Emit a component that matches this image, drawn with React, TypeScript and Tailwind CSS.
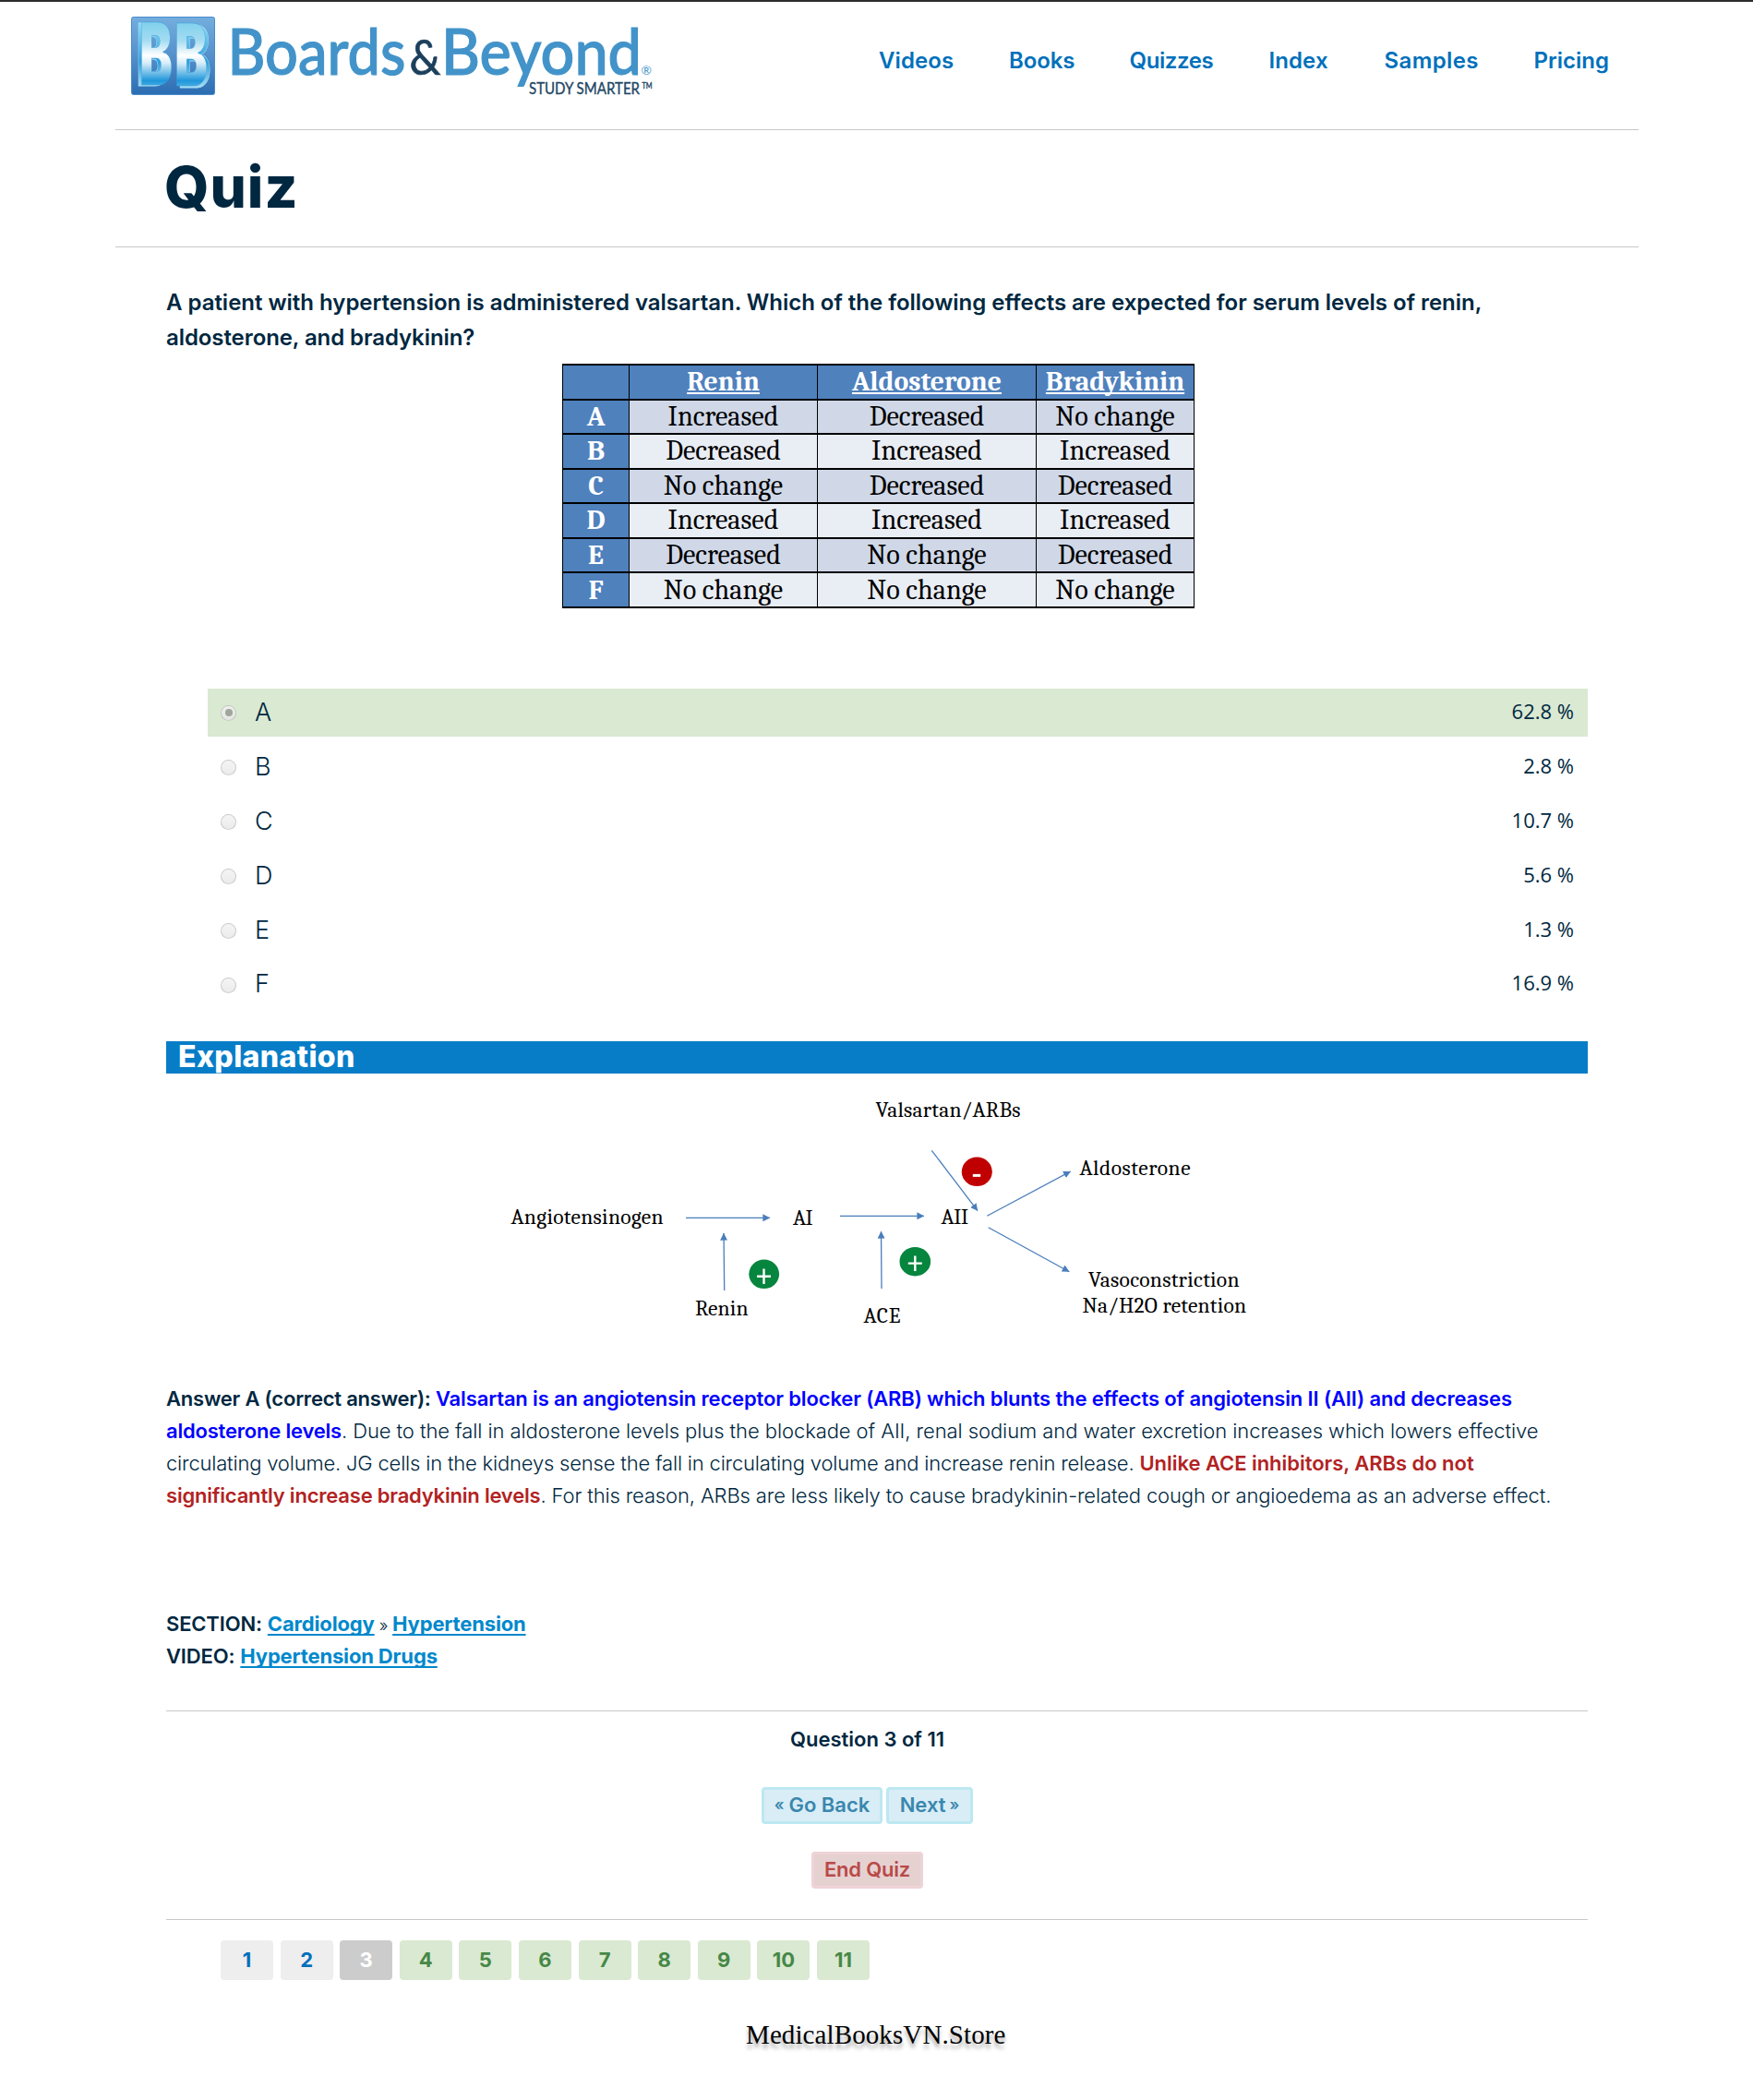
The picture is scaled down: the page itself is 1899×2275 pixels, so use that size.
import type { ReactNode } from "react";

const navItems = [
  { label: "Videos", cls: "w-[81px] tracking-[0.1px]" },
  { label: "Books", cls: "w-[70.5px] tracking-[-0.1px]" },
  { label: "Quizzes", cls: "w-[91px] tracking-[-0.4px]" },
  { label: "Index", cls: "w-[65px] tracking-[0.1px]" },
  { label: "Samples", cls: "w-[102px] tracking-[0.4px]" },
  { label: "Pricing", cls: "w-[81px] tracking-[0px]" },
];

const effects = [
  ["A", "Increased", "Decreased", "No change"],
  ["B", "Decreased", "Increased", "Increased"],
  ["C", "No change", "Decreased", "Decreased"],
  ["D", "Increased", "Increased", "Increased"],
  ["E", "Decreased", "No change", "Decreased"],
  ["F", "No change", "No change", "No change"],
];

const options = [
  { label: "A", share: "62.8 %", selected: true },
  { label: "B", share: "2.8 %" },
  { label: "C", share: "10.7 %" },
  { label: "D", share: "5.6 %" },
  { label: "E", share: "1.3 %" },
  { label: "F", share: "16.9 %" },
];

function Logo() {
  return (
    <svg width="570" height="90" viewBox="140 16 570 90" className="block shrink-0">
      <defs>
        <linearGradient id="tile" x1="0" y1="0" x2="0" y2="1">
          <stop offset="0" stopColor="#74aede" />
          <stop offset="0.5" stopColor="#5590cb" />
          <stop offset="1" stopColor="#2b6cb2" />
        </linearGradient>
        <linearGradient id="face" gradientUnits="userSpaceOnUse" x1="0" y1="24" x2="0" y2="96">
          <stop offset="0" stopColor="#7fd0ec" />
          <stop offset="0.28" stopColor="#a5dcf2" />
          <stop offset="0.5" stopColor="#ffffff" />
          <stop offset="0.62" stopColor="#d5ecf8" />
          <stop offset="0.88" stopColor="#1f97da" />
          <stop offset="1" stopColor="#55b4e4" />
        </linearGradient>
        <linearGradient id="side" gradientUnits="userSpaceOnUse" x1="0" y1="24" x2="0" y2="96">
          <stop offset="0" stopColor="#8fdcf5" />
          <stop offset="0.6" stopColor="#2f9fdc" />
          <stop offset="1" stopColor="#a9def5" />
        </linearGradient>
      </defs>
      <rect x="142.5" y="18.5" width="90" height="84" rx="2" fill="url(#tile)" stroke="#4a8ccb" />
      <g fontFamily="Inter, sans-serif" fontWeight="900" fontSize="94">
        <g fill="url(#side)" stroke="#9fdcf5" strokeWidth="0.8">
          <text x="147.5" y="93" textLength="36" lengthAdjust="spacingAndGlyphs">B</text>
          <text x="192.5" y="94.5" textLength="36" lengthAdjust="spacingAndGlyphs">B</text>
        </g>
        <g fill="url(#face)" stroke="#3f9fd8" strokeWidth="0.5">
          <text x="151" y="92" textLength="36" lengthAdjust="spacingAndGlyphs">B</text>
          <text x="189" y="93" textLength="36" lengthAdjust="spacingAndGlyphs">B</text>
        </g>
      </g>
      <g fontFamily="Lato, sans-serif" fill="#4293c9">
        <g fontSize="69" fontWeight="500" stroke="#4293c9" strokeWidth="1.1">
          <text x="246.5" y="80.5" textLength="193" lengthAdjust="spacingAndGlyphs">Boards</text>
          <text x="478" y="80.5" textLength="217" lengthAdjust="spacingAndGlyphs">Beyond</text>
        </g>
        <text x="443.5" y="80.5" fontSize="53" fill="#1c3f5c" stroke="#1c3f5c" strokeWidth="0.7" textLength="34" lengthAdjust="spacingAndGlyphs">&amp;</text>
        <text x="694.5" y="81" fontSize="14" textLength="11.5" lengthAdjust="spacingAndGlyphs">®</text>
        <g fill="#1f4766" stroke="#1f4766" strokeWidth="0.4">
          <text x="573" y="102" fontSize="17.5" textLength="120" lengthAdjust="spacingAndGlyphs">STUDY SMARTER</text>
          <text x="695.5" y="96" fontSize="8.5" textLength="11" lengthAdjust="spacingAndGlyphs">TM</text>
        </g>
      </g>
    </svg>
  );
}

function Cell({ children, tone }: { children?: ReactNode; tone: string }) {
  return (
    <div className={`flex items-center justify-center border-b-2 border-r border-black pt-[1px] leading-none ${tone}`}>
      {children}
    </div>
  );
}

function EffectsTable() {
  const head = "bg-[#4f81bd] text-white font-bold";
  return (
    <div className="ml-[429px] mt-[9px] grid h-[265px] w-[685px] grid-cols-[72px_204px_237px_171px] grid-rows-7 border-l border-t-2 border-black font-[Cambria,Caladea,serif] text-[30.2px]">
      <Cell tone={head} />
      {["Renin", "Aldosterone", "Bradykinin"].map((h) => (
        <Cell key={h} tone={head}>
          <span className="text-[29.7px] underline decoration-2 underline-offset-[2px] [text-decoration-skip-ink:none]">{h}</span>
        </Cell>
      ))}
      {effects.map((row, r) =>
        row.map((text, c) => (
          <Cell key={`${r}-${c}`} tone={c === 0 ? head : r % 2 ? "bg-[#e9edf4] text-black" : "bg-[#d0d8e8] text-black"}>
            {text}
          </Cell>
        ))
      )}
    </div>
  );
}

function Radio({ checked }: { checked?: boolean }) {
  return (
    <span className="flex size-[17px] items-center justify-center rounded-full border border-black/15 bg-linear-to-b from-[#f2f2f2]/80 to-[#e6e6e6]/80">
      {checked && <span className="size-[8px] rounded-full bg-[#a0a59d]" />}
    </span>
  );
}

const arrows = [
  [743, 1319.3, 834, 1319.3],
  [910, 1317.3, 1001, 1317.3],
  [784.7, 1398, 784, 1336],
  [955, 1396, 954.5, 1334],
  [1009.3, 1246.3, 1059, 1311.7],
  [1069.3, 1317.3, 1159.7, 1269],
  [1070.7, 1329.7, 1158.3, 1377.7],
];

const labels: [string, number, number, number][] = [
  ["Valsartan/ARBs", 948.5, 1210, 157],
  ["Angiotensinogen", 553.5, 1325.5, 165],
  ["AI", 859, 1327.3, 21.5],
  ["AII", 1019.5, 1325.7, 29.5],
  ["Renin", 753, 1425.3, 57.5],
  ["ACE", 935.5, 1433.3, 40],
  ["Aldosterone", 1169.5, 1273.3, 120],
  ["Vasoconstriction", 1179, 1393.5, 163.5],
  ["Na/H2O retention", 1172.5, 1422.3, 177.5],
];

function Diagram() {
  return (
    <svg width="1540" height="334" viewBox="180 1163 1540 334" className="block">
      <defs>
        <marker id="head" markerUnits="userSpaceOnUse" markerWidth="8" markerHeight="8" refX="7.6" refY="4" orient="auto">
          <path d="M0 0 L7.8 4 L0 8 Z" fill="#4a7ebb" />
        </marker>
      </defs>
      <g stroke="#4a7ebb" strokeWidth="1.3">
        {arrows.map(([x1, y1, x2, y2]) => (
          <line key={`${x1}-${y1}`} x1={x1} y1={y1} x2={x2} y2={y2} markerEnd="url(#head)" />
        ))}
      </g>
      <g fontFamily="Cambria, Caladea, serif" fontSize="23.5" fill="#000">
        {labels.map(([t, x, y, w]) => (
          <text key={t} x={x} y={y} textLength={w} lengthAdjust="spacing">{t}</text>
        ))}
      </g>
      <ellipse cx="827.7" cy="1380.3" rx="16.4" ry="15.8" fill="#06853e" />
      <ellipse cx="991.3" cy="1366.7" rx="16.8" ry="15.8" fill="#06853e" />
      <ellipse cx="1058.3" cy="1269.3" rx="16.5" ry="15.8" fill="#c00000" />
      <g stroke="#fff" strokeWidth="2.4">
        <path d="M820 1382.7h15M827.5 1374.5v16.5" />
        <path d="M983.8 1368.6h15M991.3 1360.5v16.5" />
        <path d="M1053.8 1273.4h8.4" strokeWidth="3" />
      </g>
    </svg>
  );
}

const link = "font-bold text-[#0088cc] underline decoration-2 underline-offset-[3px] [text-decoration-skip-ink:none]";

export default function App() {
  return (
    <div className="min-h-[2275px] w-[1899px] overflow-hidden border-t-2 border-[#2b2b2b] bg-white font-[Inter,sans-serif] text-[#002740]">
      <div className="ml-[125px] w-[1650px]">
        <header className="flex h-[139px] items-start border-b border-[#c8c8c8] pl-[15px] pt-[14px]">
          <Logo />
          <nav className="ml-[242px] mt-[30px] flex gap-[60px]">
            {navItems.map((n) => (
              <a key={n.label} className={`whitespace-nowrap text-[24px] font-semibold leading-[40px] text-[#0070bb] ${n.cls}`}>
                {n.label}
              </a>
            ))}
          </nav>
        </header>

        <div className="h-[127px] border-b border-[#c8c8c8] pl-[53px] pt-[31px]">
          <h1 className="text-[62px] font-extrabold leading-[62px] tracking-[1px]">Quiz</h1>
        </div>

        <main className="w-[1595px] pl-[55px] pt-[41px]">
          <p className="whitespace-nowrap text-[24px] font-semibold leading-[38px] tracking-[-0.02px]">
            A patient with hypertension is administered valsartan. Which of the following effects are expected for serum levels of renin,
            <br />
            <span className="tracking-[-0.08px]">aldosterone, and bradykinin?</span>
          </p>
          <EffectsTable />

          <div className="ml-[45px] mt-[87px] flex flex-col gap-[7px]">
            {options.map((o) => (
              <div key={o.label} className={`group flex h-[52px] items-center pl-[14px] pr-[15px] ${o.selected ? "bg-[#dae9d2]" : ""}`}>
                <Radio checked={o.selected} />
                <span className="ml-[20px] pb-[2px] text-[27px] font-[350] leading-none group-last:pb-[4px]">{o.label}</span>
                <span className="ml-auto pb-[4px] font-['Open_Sans',sans-serif] text-[22px] font-normal leading-none tracking-[0px] group-last:pb-[6px]">
                  {o.share}
                </span>
              </div>
            ))}
          </div>

          <h2 className="mt-[35px] h-[35px] bg-[#087dc7] pl-[13px] text-[32px] font-extrabold leading-[33px] tracking-[0.4px] text-white">
            Explanation
          </h2>

          <Diagram />

          <p className="h-[141px] whitespace-nowrap pt-[1px] text-[22px] font-light leading-[35px] tracking-[-0.08px]">
            <strong className="font-semibold tracking-[-0.22px]">Answer A (correct answer): </strong>
            <strong className="font-semibold tracking-[-0.14px] text-[#0000ff]">
              Valsartan is an angiotensin receptor blocker (ARB) which blunts the effects of angiotensin II (AII) and decreases
              <br />
              <span className="tracking-[-0.2px]">aldosterone levels</span>
            </strong>
            . Due to the fall in aldosterone levels plus the blockade of AII, renal sodium and water excretion increases which lowers effective
            <br />
            <span className="tracking-[-0.19px]">
              circulating volume. JG cells in the kidneys sense the fall in circulating volume and increase renin release.{" "}
            </span>
            <strong className="font-semibold tracking-[-0.04px] text-[#b22222]">
              Unlike ACE inhibitors, ARBs do not
              <br />
              <span className="tracking-[-0.2px]">significantly increase bradykinin levels</span>
            </strong>
            <span className="tracking-[-0.14px]">
              . For this reason, ARBs are less likely to cause bradykinin-related cough or angioedema as an adverse effect.
            </span>
          </p>

          <div className="mt-[104px] whitespace-nowrap text-[22px] leading-[35px] tracking-[-0.16px]">
            <div className="h-[35px]">
              <strong className="font-semibold">SECTION:</strong> <a className={link}>Cardiology</a>
              <span className="mx-[5px] text-[18px] font-light">»</span>
              <a className={link}>Hypertension</a>
            </div>
            <div className="h-[35px]">
              <strong className="font-semibold">VIDEO:</strong> <a className={link}>Hypertension Drugs</a>
            </div>
          </div>

          <div className="mt-[41px] flex flex-col items-center border-y border-[#c8c8c8] pb-[33px] pr-[21px] pt-[13px] text-[22px] font-semibold">
            <div className="leading-[35px]">Question 3 of 11</div>
            <div className="mt-[34px] flex gap-[4px] leading-none text-[#3a87ad]">
              <button className="flex h-[40px] w-[131px] items-center justify-center gap-[5px] rounded-[4px] border-[3px] border-[#bce8f1] bg-[#d9edf7] pb-[2px]">
                <span className="text-[17px]">«</span>
                <span className="whitespace-nowrap">Go Back</span>
              </button>
              <button className="flex h-[40px] w-[94px] items-center justify-center gap-[4px] rounded-[4px] border-[3px] border-[#bce8f1] bg-[#d9edf7] pb-[2px]">
                <span>Next</span>
                <span className="text-[17px]">»</span>
              </button>
            </div>
            <button className="mt-[30px] flex h-[40px] w-[121px] items-center justify-center whitespace-nowrap rounded-[4px] border-[3px] border-[#eed3d7] bg-[#e6d1d1] pb-[2px] leading-none tracking-[-0.2px] text-[#b94a48]">
              End Quiz
            </button>
          </div>

          <div className="ml-[59px] mt-[22px] flex gap-[7.6px]">
            {Array.from({ length: 11 }, (_, i) => i + 1).map((n) => (
              <a
                key={n}
                className={`flex h-[43px] w-[57px] items-center justify-center rounded-[4px] pb-[2px] text-[22px] font-bold leading-none ${
                  n < 3 ? "bg-[#eeeeee] text-[#0070bb]" : n === 3 ? "bg-[#cccccc] text-white" : "bg-[#dae9d2] text-[#468847]"
                }`}
              >
                {n}
              </a>
            ))}
          </div>

          <footer className="ml-[628px] mt-[39px] whitespace-nowrap font-['Liberation_Serif',serif] text-[29px] leading-[40px] tracking-[0.1px] text-black [text-shadow:0_5px_4px_rgba(0,0,0,0.35)]">
            MedicalBooksVN.Store
          </footer>
        </main>
      </div>
    </div>
  );
}
